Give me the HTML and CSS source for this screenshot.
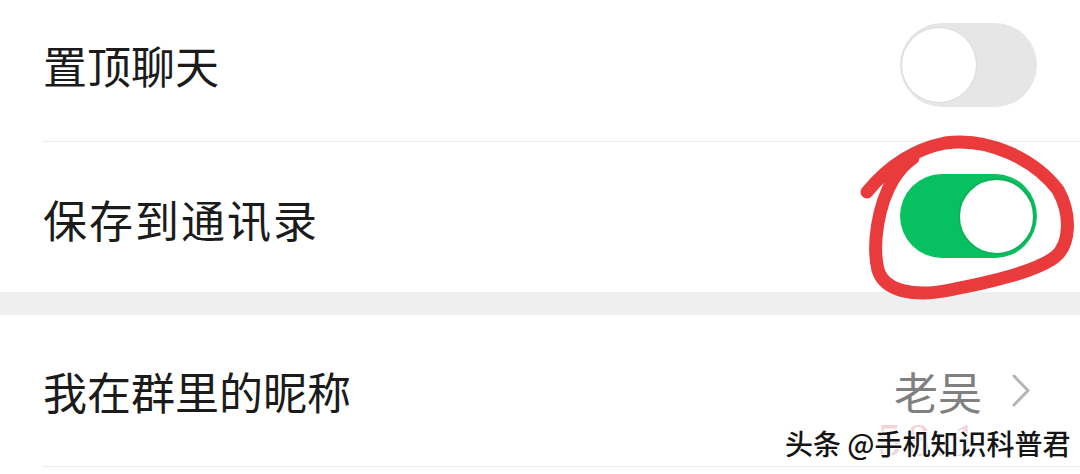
FILE: index.html
```html
<!DOCTYPE html>
<html lang="zh-CN">
<head>
<meta charset="utf-8">
<title>聊天信息</title>
<link rel="stylesheet" href="styles.css">
</head>
<body>
<div class="page">
  <div class="group">
    <div class="cell cell-top">
      <span class="label">置顶聊天</span>
      <span class="switch"><span class="knob"></span></span>
    </div>
    <div class="cell cell-mid">
      <span class="label label-wide">保存到通讯录</span>
      <span class="switch switch-on"><span class="knob"></span></span>
    </div>
  </div>
  <div class="gap"></div>
  <div class="group">
    <div class="cell cell-nick">
      <span class="label">我在群里的昵称</span>
      <span class="value">老吴</span>
      <svg class="chev" width="18" height="33" viewBox="0 0 18 33"><path d="M2 2 L16 16.5 L2 31" fill="none" stroke="#b5b5b5" stroke-width="3" stroke-linecap="round" stroke-linejoin="round"/></svg>
    </div>
  </div>

  <svg class="scribble" width="1080" height="474" viewBox="0 0 1080 474">
    <path d="M867 192 C885 170, 910 150, 945 143 C990 137, 1035 160, 1058 190 C1072 215, 1070 245, 1055 257 C1035 272, 990 282, 950 290 C915 297, 885 292, 878 270 C872 245, 878 205, 893 180 C900 168, 907 162, 913 158" fill="none" stroke="#ea3b3c" stroke-width="13" stroke-linecap="round" stroke-linejoin="round"/>
  </svg>
  <span class="ghost">58.1</span>
  <span class="mark">头条 @手机知识科普君</span>
</div>
</body>
</html>
```
FILE: styles.css
```css
html, body {
  margin: 0;
  padding: 0;
  background: #ffffff;
}
body {
  width: 1080px;
  height: 474px;
  overflow: hidden;
  font-family: "Noto Sans CJK SC", "Noto Sans", sans-serif;
}
.page {
  position: relative;
  width: 1080px;
  height: 474px;
  background: #ffffff;
}
.group {
  display: flex;
  flex-direction: column;
}
.cell {
  display: flex;
  align-items: center;
  margin-left: 42px;
  padding-left: 1px;
  padding-right: 43px;
  box-sizing: border-box;
}
.cell-top {
  height: 142px;
  padding-bottom: 12px;
  border-bottom: 1px solid #ededed;
}
.cell-mid {
  height: 150px;
  padding-top: 4px;
}
.cell-nick {
  height: 152px;
  padding-right: 50px;
  border-bottom: 1px solid #ececec;
}
.label {
  flex: 1;
  font-size: 44px;
  line-height: 1;
  color: #1b1b1b;
}
.label-wide {
  letter-spacing: 2px;
}
.gap {
  height: 23px;
  background: #efefef;
}
.switch {
  display: flex;
  align-items: center;
  justify-content: flex-start;
  width: 137px;
  height: 84px;
  border-radius: 42px;
  background: #e6e6e6;
  padding: 0 1px;
  box-sizing: border-box;
}
.knob {
  width: 76px;
  height: 76px;
  border-radius: 50%;
  background: #ffffff;
  border: 1px solid #dadada;
  box-sizing: border-box;
}
.switch-on {
  background: #07c160;
  justify-content: flex-end;
  padding: 0 2px;
}
.cell-mid .switch {
  margin-top: -6px;
}
.switch-on .knob {
  width: 77px;
  height: 77px;
  border: 2px solid #0bb35a;
}
.value {
  font-size: 44px;
  line-height: 1;
  color: #808080;
  margin-right: 30px;
}
.chev {
  display: block;
}
.scribble {
  position: absolute;
  left: 0;
  top: 0;
  pointer-events: none;
}
.ghost {
  position: absolute;
  left: 878px;
  top: 418px;
  font-family: "Liberation Serif", serif;
  font-size: 46px;
  line-height: 1;
  color: #f3d3d8;
  letter-spacing: 6px;
}
.mark {
  position: absolute;
  left: 785px;
  top: 429px;
  font-size: 28px;
  font-weight: 500;
  line-height: 1;
  color: #151515;
  white-space: nowrap;
  text-shadow: 1px 1px 0 #fff, -1px -1px 0 #fff, 1px -1px 0 #fff, -1px 1px 0 #fff, 0 1px 0 #fff, 0 -1px 0 #fff, 1px 0 0 #fff, -1px 0 0 #fff;
}
```
